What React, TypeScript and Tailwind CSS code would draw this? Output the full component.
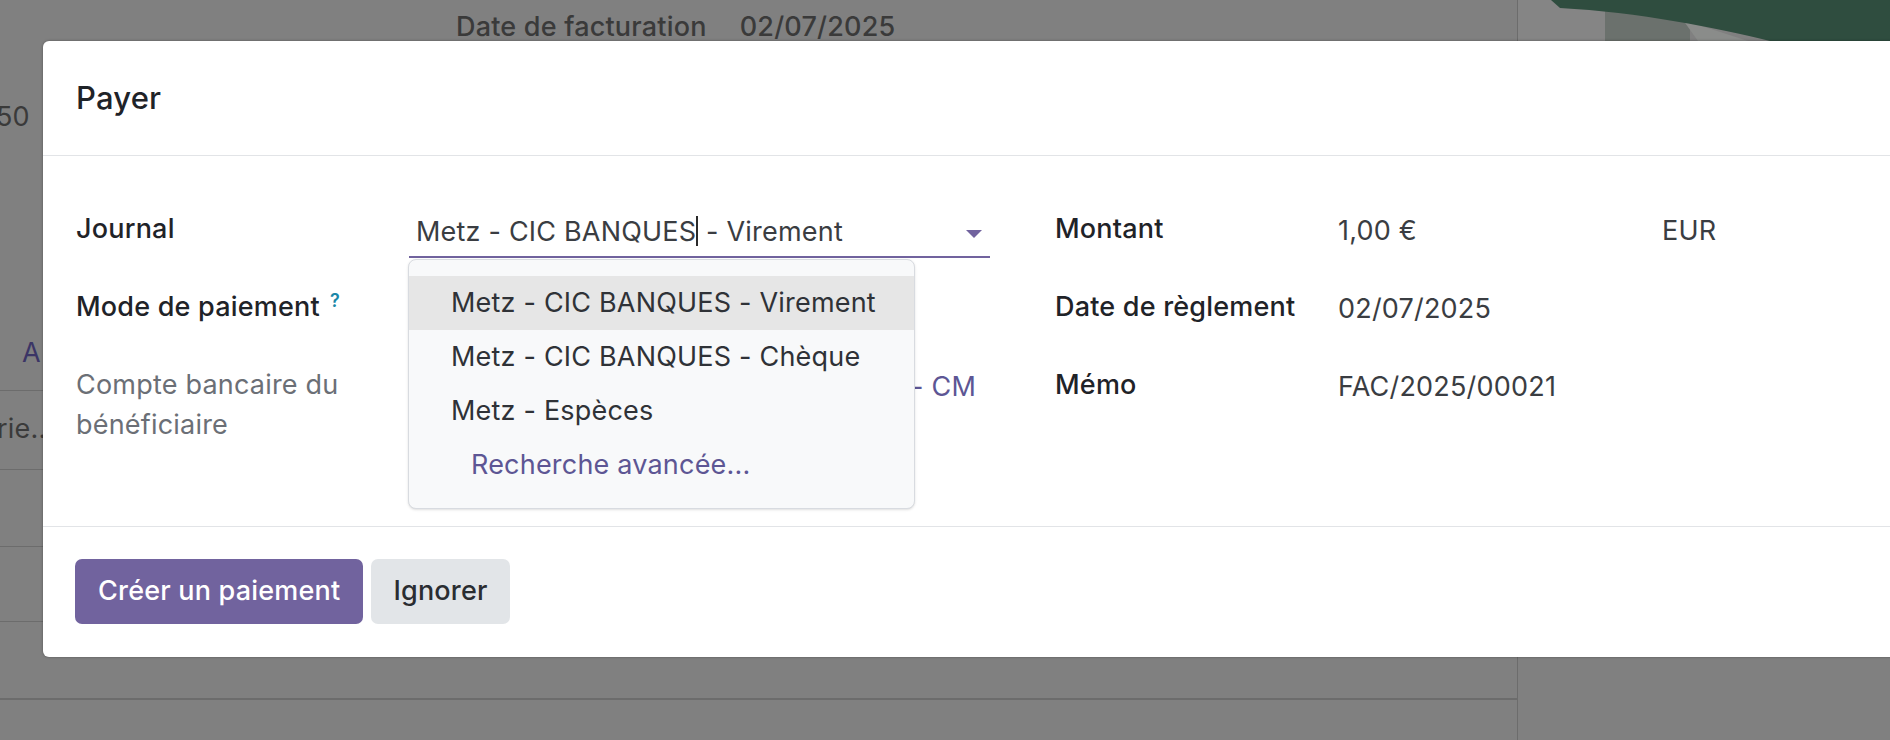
import React from "react"

const FONT = { fontFamily: "Inter, 'Noto Sans', sans-serif" }

function BackgroundPage() {
  // The list view behind the dialog, dimmed by the backdrop
  return (
    <div className="absolute inset-0 bg-[#808080] text-[27px] leading-[40px] tracking-[0.2px] text-[#3a3a3a]">
      <div className="absolute left-[456px] top-[7px] flex gap-[33px] font-medium">
        <span>Date de facturation</span>
        <span>02/07/2025</span>
      </div>
      <span className="absolute left-[-4px] top-[97px]">50</span>
      <span className="absolute left-[22px] top-[333px] text-[#3b3566]">A</span>
      <span className="absolute left-[-3px] top-[409px]">rie...</span>
      <div className="absolute left-0 top-[390px] h-[1px] w-[43px] bg-[#6c6c6c]" />
      <div className="absolute left-0 top-[469px] h-[1px] w-[43px] bg-[#6c6c6c]" />
      <div className="absolute left-0 top-[546px] h-[1px] w-[43px] bg-[#6c6c6c]" />
      <div className="absolute left-0 top-[621px] h-[1px] w-[43px] bg-[#6c6c6c]" />
      <div className="absolute left-0 top-[698px] h-[2px] w-[1517px] bg-[#6c6c6c]" />
      <div className="absolute left-[1517px] top-0 h-full w-[1px] bg-[#6c6c6c]" />
      <svg className="absolute left-[1518px] top-0" width="372" height="41" viewBox="0 0 372 41">
        <rect x="0" y="0" width="88" height="41" fill="#858585" />
        <rect x="87" y="0" width="85" height="41" fill="#6b716d" />
        <polygon points="165,20 230,41 180,41" fill="#8a8c8a" />
        <path d="M33 0 H372 V41 H252 C200 28 120 12 42 8 Z" fill="#2f4d3f" />
      </svg>
    </div>
  )
}

function Label({ children, muted }: { children: React.ReactNode; muted?: boolean }) {
  return (
    <div className={`pt-[9px] leading-[40px] ${muted ? "font-normal text-[#6b6f76]" : "font-medium text-[#1f2328]"}`}>
      {children}
    </div>
  )
}

function JournalDropdown() {
  const items = [
    "Metz - CIC BANQUES - Virement",
    "Metz - CIC BANQUES - Chèque",
    "Metz - Espèces",
  ]
  return (
    <div className="absolute left-[-1px] top-full z-10 mt-[3px] w-[507px] rounded-[8px] border border-[#d8dbe0] bg-[#f8f9fa] py-[16px] shadow-sm">
      {items.map((item, i) => (
        <div
          key={item}
          className={`flex h-[54px] items-center pl-[42px] text-[#2f3237] ${i === 0 ? "bg-[#e6e6e6]" : ""}`}
        >
          {item}
        </div>
      ))}
      <div className="flex h-[54px] items-center pl-[62px] text-[#5d5694]">Recherche avancée...</div>
    </div>
  )
}

export default function App() {
  return (
    <div className="relative h-[740px] w-[1890px] overflow-hidden" style={FONT}>
      <BackgroundPage />

      <div className="absolute left-[43px] top-[41px] w-[1900px] rounded-[6px] bg-white text-[27px] tracking-[0.2px] shadow-[0_0_3px_rgba(0,0,0,0.35)]">
        {/* Header */}
        <div className="flex h-[115px] items-center border-b border-[#e2e4e7] px-[33px]">
          <h4 className="text-[31px] font-medium text-[#1f2328]">Payer</h4>
        </div>

        {/* Body */}
        <div className="flex h-[370px] gap-[65px] px-[33px] pt-[44px]">
          {/* Left group */}
          <div className="grid w-[914px] grid-cols-[333px_581px] auto-rows-[78px]">
            <Label>Journal</Label>
            <div className="pt-[9px]">
              <div className="relative flex items-center justify-between border-b-2 border-[#71639e] pb-[4px] pl-[7px] pr-[8px] pt-[2px] leading-[40px] text-[#3a3d42]">
                <span className="whitespace-nowrap">
                  Metz - CIC BANQUES<span className="inline-block h-[30px] w-[2px] translate-y-[5px] bg-[#2a2a2a]" /> - Virement
                </span>
                <svg width="16" height="8" viewBox="0 0 16 8" className="mt-[4px]">
                  <polygon points="0,0 16,0 8,8" fill="#71639e" />
                </svg>
                <JournalDropdown />
              </div>
            </div>

            <Label>
              Mode de paiement
              <sup className="ml-[10px] text-[18px] font-semibold text-[#1b87a8]">?</sup>
            </Label>
            <div />

            <Label muted>
              Compte bancaire du
              <br />
              bénéficiaire
            </Label>
            <div className="flex justify-end pt-[11px] pr-[14px] leading-[40px] text-[#5d5694]">
              <span className="whitespace-nowrap">- CM</span>
            </div>
          </div>

          {/* Right group */}
          <div className="grid flex-1 grid-cols-[283px_324px_1fr] auto-rows-[78px]">
            <Label>Montant</Label>
            <div className="pt-[11px] leading-[40px] text-[#3a3d42]">1,00 €</div>
            <div className="pt-[11px] leading-[40px] text-[#3a3d42]">EUR</div>

            <Label>Date de règlement</Label>
            <div className="col-span-2 pt-[11px] leading-[40px] text-[#3a3d42]">02/07/2025</div>

            <Label>Mémo</Label>
            <div className="col-span-2 pt-[11px] leading-[40px] text-[#3a3d42]">FAC/2025/00021</div>
          </div>
        </div>

        {/* Footer */}
        <div className="flex gap-[8px] border-t border-[#e2e4e7] px-[32px] pb-[33px] pt-[32px]">
          <button className="h-[65px] rounded-[7px] bg-[#71639e] px-[23px] font-medium text-white">
            Créer un paiement
          </button>
          <button className="h-[65px] rounded-[7px] bg-[#e2e5e8] px-[22px] font-medium text-[#2a2d31]">
            Ignorer
          </button>
        </div>
      </div>
    </div>
  )
}
